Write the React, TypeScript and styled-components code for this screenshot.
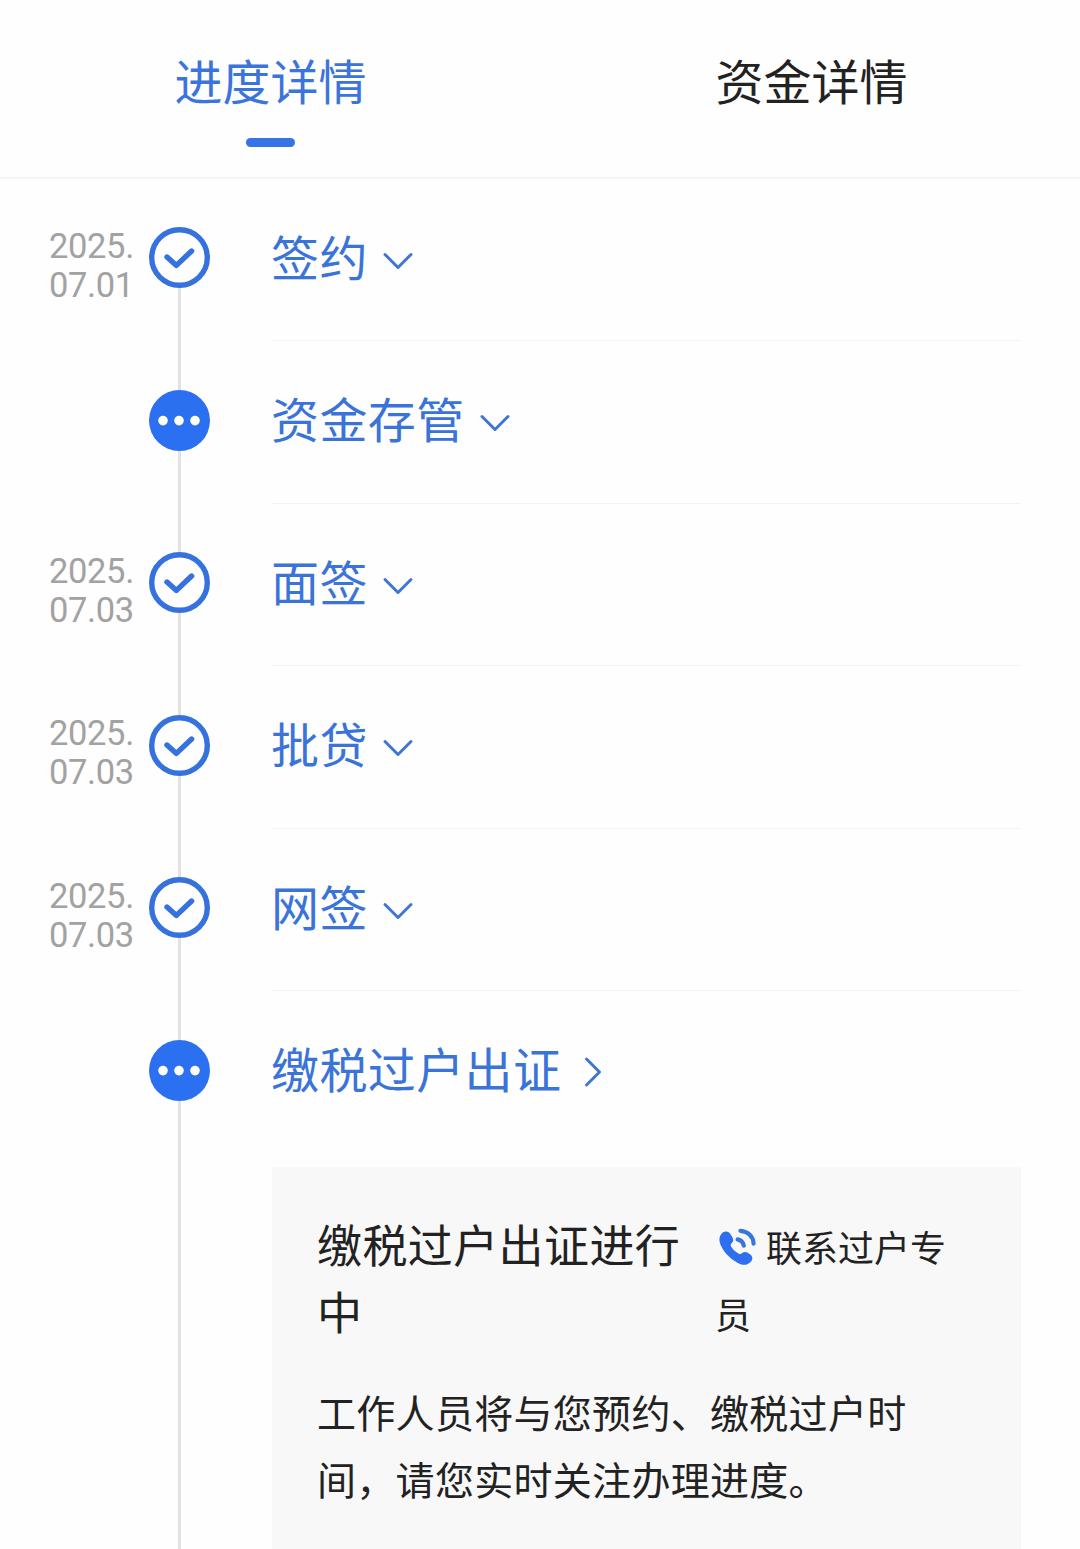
import React from "react";
import styled, { createGlobalStyle } from "styled-components";

const GlobalStyle = createGlobalStyle`
  * { box-sizing: border-box; }
  html, body { margin: 0; padding: 0; background: #fefefe; }
  body { font-family: "Noto Sans CJK SC", sans-serif; color: #222; overflow: hidden; }
`;

const Page = styled.main`
  width: 1080px;
  height: 1549px;
  overflow: hidden;
  display: flex;
  flex-direction: column;
  background: #fefefe;
`;

const Tabs = styled.nav`
  display: grid;
  grid-template-columns: 541px 541px;
  height: 178.5px;
  flex: none;
  border-bottom: 2px solid #f6f6f6;
`;

const Tab = styled.div<{ $active?: boolean }>`
  display: flex;
  flex-direction: column;
  align-items: center;
  padding-top: 43px;
  font-size: 48px;
  line-height: 72px;
  white-space: nowrap;
  color: ${(p) => (p.$active ? "#3a74dc" : "#222")};
`;

const TabBar = styled.span`
  width: 49px;
  height: 9px;
  margin-top: 23px;
  border-radius: 5px;
  background: #3573e6;
`;

const Timeline = styled.section`
  display: flex;
  flex-direction: column;
  flex: 1;
`;

const Step = styled.article<{ $last?: boolean }>`
  display: grid;
  grid-template-columns: 100px 61px 749px;
  padding-left: 49px;
  height: ${(p) => (p.$last ? "558px" : "162.5px")};
  flex: none;
`;

const StepDate = styled.time`
  display: flex;
  flex-direction: column;
  padding-top: 48px;
  font-family: Roboto, sans-serif;
  font-size: 34.5px;
  letter-spacing: -0.35px;
  line-height: 39px;
  color: #a2a2a2;
`;

const Rail = styled.div`
  display: flex;
  flex-direction: column;
  align-items: center;
`;

const Segment = styled.span<{ $lead?: boolean; $hidden?: boolean }>`
  width: 3px;
  height: ${(p) => (p.$lead ? "48.5px" : "auto")};
  flex: ${(p) => (p.$lead ? "none" : "1")};
  background: ${(p) => (p.$hidden ? "transparent" : "#e2e2e2")};
`;

const Marker = styled.svg`
  display: block;
  width: 61px;
  height: 61px;
  flex: none;
`;

const StepBody = styled.div<{ $last?: boolean }>`
  margin-left: 62px;
  width: 749px;
  border-bottom: ${(p) => (p.$last ? "none" : "1px solid #f3f3f3")};
`;

const StepTitle = styled.h2`
  margin: 0 0 0 -1px;
  padding-top: 40px;
  display: flex;
  align-items: center;
  font-weight: 400;
  font-size: 48px;
  letter-spacing: 0.4px;
  line-height: 72px;
  white-space: nowrap;
  color: #3a74d8;
`;

const Chevron = styled.svg<{ $side?: boolean }>`
  display: block;
  flex: none;
  width: 32px;
  height: 32px;
  margin-top: ${(p) => (p.$side ? "10px" : "12px")};
  margin-left: ${(p) => (p.$side ? "14px" : "14.5px")};
`;

const Card = styled.div`
  margin-top: 64px;
  height: 420px;
  padding: 43px 45px 0 45px;
  background: #f8f8f8;
`;

const CardHead = styled.div`
  display: grid;
  grid-template-columns: 398px 240px;
`;

const CardTitle = styled.h3`
  margin: 0;
  font-weight: 400;
  font-size: 45px;
  letter-spacing: 0.4px;
  line-height: 67px;
`;

const Contact = styled.div`
  font-size: 36px;
  line-height: 67px;
  padding-top: 3px;
`;

const PhoneIcon = styled.svg`
  display: inline-block;
  width: 38px;
  height: 38px;
  margin: 0 9px 0 4px;
  vertical-align: -4px;
`;

const Description = styled.p`
  margin: 31px 0 0;
  font-size: 39px;
  letter-spacing: 0.3px;
  line-height: 67px;
  white-space: nowrap;
`;

const DoneMarker = () => (
  <Marker viewBox="0 0 61 61" fill="none">
    <circle cx="30.5" cy="30.5" r="27.8" stroke="#3672de" strokeWidth="5.4" />
    <path d="M18 30 L27.4 38.4 L42.6 24" stroke="#3672de" strokeWidth="5.4" strokeLinecap="round" strokeLinejoin="round" />
  </Marker>
);

const PendingMarker = () => (
  <Marker viewBox="0 0 61 61">
    <circle cx="30.5" cy="30.5" r="30.5" fill="#2b70f1" />
    <circle cx="14" cy="30.6" r="4.8" fill="#fff" />
    <circle cx="30" cy="30.6" r="4.8" fill="#fff" />
    <circle cx="46" cy="30.6" r="4.8" fill="#fff" />
  </Marker>
);

const Arrow = ({ side }: { side?: boolean }) => (
  <Chevron $side={side} viewBox="0 0 32 32" fill="none">
    <path
      d={side ? "M11.5 3 L24.5 16 L11.5 29" : "M3 9.5 L16 22.5 L29 9.5"}
      stroke="#3f76d2"
      strokeWidth="3"
      strokeLinecap="round"
      strokeLinejoin="round"
    />
  </Chevron>
);

const steps = [
  { title: "签约", date: ["2025.", "07.01"] },
  { title: "资金存管" },
  { title: "面签", date: ["2025.", "07.03"] },
  { title: "批贷", date: ["2025.", "07.03"] },
  { title: "网签", date: ["2025.", "07.03"] },
];

export default function App() {
  return (
    <>
      <GlobalStyle />
      <Page>
        <Tabs>
          <Tab $active>
            进度详情
            <TabBar />
          </Tab>
          <Tab>资金详情</Tab>
        </Tabs>
        <Timeline>
          {steps.map((step, i) => (
            <Step key={step.title}>
              <StepDate>
                {step.date?.map((part) => <span key={part}>{part}</span>)}
              </StepDate>
              <Rail>
                <Segment $lead $hidden={i === 0} />
                {step.date ? <DoneMarker /> : <PendingMarker />}
                <Segment />
              </Rail>
              <StepBody>
                <StepTitle>
                  {step.title}
                  <Arrow />
                </StepTitle>
              </StepBody>
            </Step>
          ))}
          <Step $last>
            <StepDate />
            <Rail>
              <Segment $lead />
              <PendingMarker />
              <Segment />
            </Rail>
            <StepBody $last>
              <StepTitle>
                缴税过户出证
                <Arrow side />
              </StepTitle>
              <Card>
                <CardHead>
                  <CardTitle>缴税过户出证进行中</CardTitle>
                  <Contact>
                    <PhoneIcon viewBox="0 0 38 38" fill="none">
                      <path
                        d="M3.2 5 C5.8 2.8 9.2 3 11.2 5.8 L13.4 9.2 C14.8 11.6 14.4 13.5 12.6 15.2 C11.4 16.4 11.4 17.6 12.4 19 C14.4 21.9 16.4 23.7 19.3 25.4 C20.8 26.3 22 26.2 23.2 25.1 C24.9 23.6 26.8 23.5 28.7 24.8 L31.2 26.6 C33.8 28.4 34 31.4 31.8 33.8 C28.4 37.6 24 37.7 18.8 35 C11.6 31.1 5.8 25.6 2.4 18.6 C-0.4 12.9 -0.2 8.2 3.2 5 Z"
                        fill="#2d6ff0"
                      />
                      <path d="M18.6 11.4 C22 12.2 24.2 14.4 24.8 17.6" stroke="#3975de" strokeWidth="4.2" strokeLinecap="round" />
                      <path d="M21.4 2.8 C29.2 3.6 34.2 8.4 34.6 15.6" stroke="#3975de" strokeWidth="4.2" strokeLinecap="round" />
                    </PhoneIcon>
                    联系过户专员
                  </Contact>
                </CardHead>
                <Description>
                  工作人员将与您预约、缴税过户时
                  <br />
                  间，请您实时关注办理进度。
                </Description>
              </Card>
            </StepBody>
          </Step>
        </Timeline>
      </Page>
    </>
  );
}
